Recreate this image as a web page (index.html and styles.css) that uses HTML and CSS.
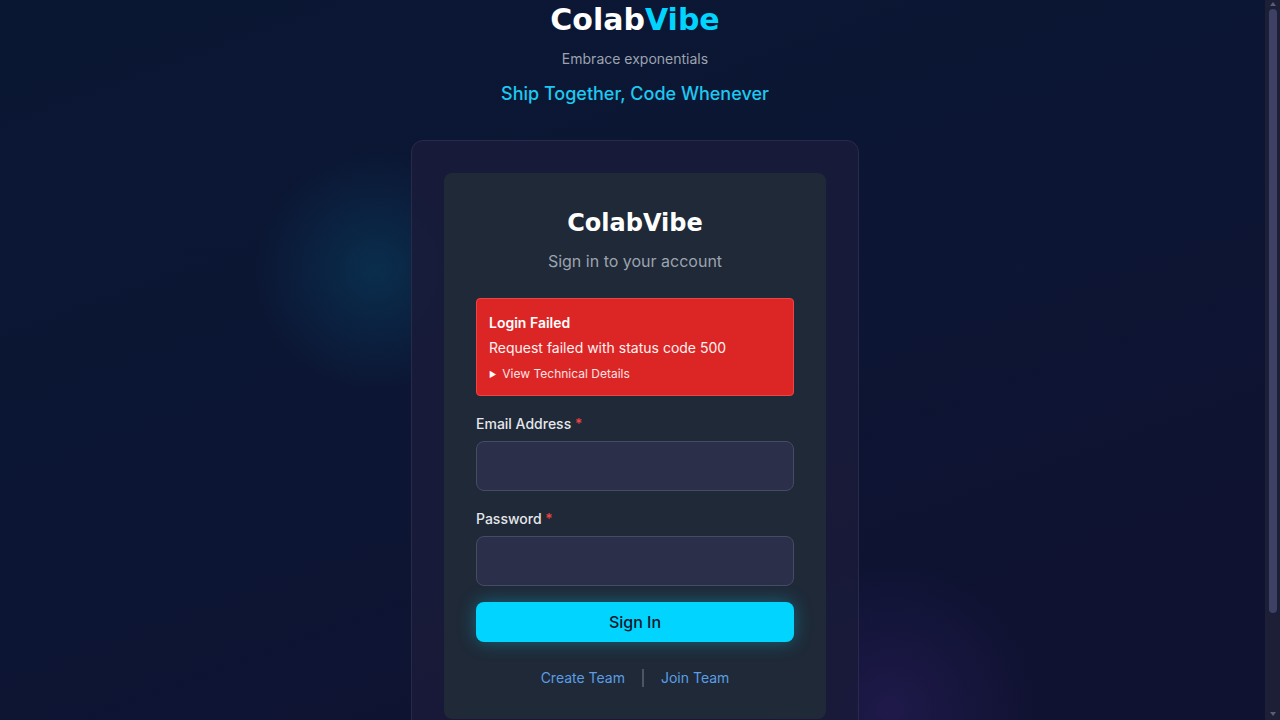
FILE: index.html
```html
<!DOCTYPE html>
<html lang="en">
<head>
<meta charset="utf-8">
<title>ColabVibe - Sign In</title>
<link rel="stylesheet" href="styles.css">
</head>
<body>
<div class="glow glow-cyan"></div>
<div class="glow glow-purple"></div>
<main class="page">
  <header class="brand">
    <h1 class="brand-title">Colab<span class="accent">Vibe</span></h1>
    <p class="brand-sub">Embrace exponentials</p>
    <p class="brand-tagline">Ship Together, Code Whenever</p>
  </header>

  <section class="shell">
    <div class="card">
      <div class="card-head">
        <h2 class="card-title">ColabVibe</h2>
        <p class="card-sub">Sign in to your account</p>
      </div>

      <div class="alert">
        <div class="alert-title">Login Failed</div>
        <div class="alert-msg">Request failed with status code 500</div>
        <div class="alert-details"><span class="tri">&#9654;</span>View Technical Details</div>
      </div>

      <form class="form">
        <div class="field">
          <label class="label">Email Address <span class="req">*</span></label>
          <div class="input"></div>
        </div>
        <div class="field">
          <label class="label">Password <span class="req">*</span></label>
          <div class="input"></div>
        </div>
        <div class="btn">Sign In</div>
      </form>

      <nav class="links">
        <a class="link">Create Team</a>
        <span class="sep"></span>
        <a class="link">Join Team</a>
      </nav>
    </div>
  </section>
</main>
<div class="scrollbar">
  <span class="sb-arrow sb-up"></span>
  <span class="sb-thumb"></span>
  <span class="sb-arrow sb-down"></span>
</div>
</body>
</html>
```

FILE: styles.css
```css
html {
  background: #0c1533;
}
* { box-sizing: border-box; }
body {
  margin: 0;
  min-height: 830px;
  font-family: Inter, "Noto Sans", sans-serif;
  color: #fff;
  background:
    linear-gradient(160deg, #0a1733 0%, #0c1634 45%, #0f1231 75%, #111231 100%);
  position: relative;
  overflow-x: hidden;
}
.glow {
  position: absolute;
  border-radius: 50%;
  pointer-events: none;
}
.glow-cyan {
  left: 255px;
  top: 150px;
  width: 240px;
  height: 240px;
  background: radial-gradient(circle at center, rgba(10, 50, 82, 0.85) 0%, rgba(10, 46, 78, 0.55) 30%, rgba(11, 30, 60, 0) 70%);
}
.glow-purple {
  left: 740px;
  top: 560px;
  width: 300px;
  height: 300px;
  background: radial-gradient(circle at center, rgba(36, 28, 82, 0.75) 0%, rgba(30, 26, 76, 0.45) 35%, rgba(20, 20, 60, 0) 70%);
}
.page {
  position: relative;
  display: flex;
  flex-direction: column;
  align-items: center;
  padding-left: 5px;
  padding-right: 15px;
}
.brand { text-align: center; }
.brand-title {
  margin: 0;
  font-family: "DejaVu Sans", sans-serif;
  font-size: 30px;
  line-height: 40px;
  font-weight: 700;
  color: #fff;
}
.accent { color: #00d4ff; }
.brand-sub {
  margin: 9px 0 0;
  font-size: 14px;
  line-height: 20px;
  color: #9ca3af;
}
.brand-tagline {
  margin: 11px 0 0;
  font-size: 18px;
  line-height: 28px;
  font-weight: 500;
  color: #1ec8f0;
}
.shell {
  margin-top: 32px;
  width: 448px;
  padding: 32px 32px 32px;
  border: 1px solid #272a48;
  border-radius: 12px;
  background: rgba(26, 27, 58, 0.85);
}
.card {
  background: #1f2937;
  border-radius: 8px;
  padding: 34px 32px 29px;
}
.card-head { text-align: center; }
.card-title {
  margin: 0;
  font-family: "DejaVu Sans", sans-serif;
  font-size: 24px;
  line-height: 32px;
  font-weight: 700;
  color: #fff;
}
.card-sub {
  margin: 10px 0 0;
  font-size: 16px;
  line-height: 24px;
  color: #9ca3af;
}
.alert {
  margin-top: 25px;
  background: #dc2626;
  border: 1px solid #ef4444;
  border-radius: 4px;
  padding: 14px 12px 13px;
}
.alert-title {
  font-size: 14px;
  line-height: 20px;
  font-weight: 600;
  color: #fff;
}
.alert-msg {
  margin-top: 5px;
  font-size: 14px;
  line-height: 20px;
  color: #fef2f2;
}
.alert-details {
  margin-top: 8px;
  font-size: 12px;
  line-height: 16px;
  color: #fde2e2;
  display: flex;
  align-items: center;
}
.tri {
  font-size: 8px;
  margin-right: 6px;
  color: #fff;
}
.form {
  margin-top: 18px;
  display: flex;
  flex-direction: column;
}
.field + .field { margin-top: 18px; }
.label {
  display: block;
  font-size: 14px;
  line-height: 20px;
  font-weight: 500;
  color: #e5e7eb;
  margin-bottom: 7px;
}
.req { color: #ef4444; }
.input {
  height: 50px;
  background: #2b2f49;
  border: 1px solid #464b66;
  border-radius: 8px;
}
.btn {
  margin-top: 16px;
  height: 40px;
  border-radius: 8px;
  background: #00d4ff;
  color: #0f172a;
  font-size: 16px;
  font-weight: 500;
  display: flex;
  align-items: center;
  justify-content: center;
  box-shadow: 0 0 18px rgba(0, 212, 255, 0.35);
}
.links {
  margin-top: 24px;
  display: flex;
  justify-content: center;
  align-items: center;
  gap: 17px;
  font-size: 14px;
  line-height: 24px;
}
.link { color: #5b9ee6; }
.sep {
  width: 2px;
  height: 18px;
  background: #4b5563;
}
.scrollbar {
  position: fixed;
  top: 0;
  right: 0;
  width: 15px;
  height: 720px;
  background: #1d1f37;
  display: flex;
  flex-direction: column;
  align-items: center;
  padding: 2px 0;
}
.sb-arrow {
  width: 0;
  height: 0;
  border-left: 3px solid transparent;
  border-right: 3px solid transparent;
}
.sb-up {
  border-bottom: 4px solid #5a5d7a;
  margin-bottom: 3px;
}
.sb-down {
  border-top: 4px solid #5a5d7a;
  margin-top: auto;
  margin-bottom: 2px;
}
.sb-thumb {
  width: 8px;
  height: 604px;
  background: #3e4163;
  border-radius: 4px;
}
```
